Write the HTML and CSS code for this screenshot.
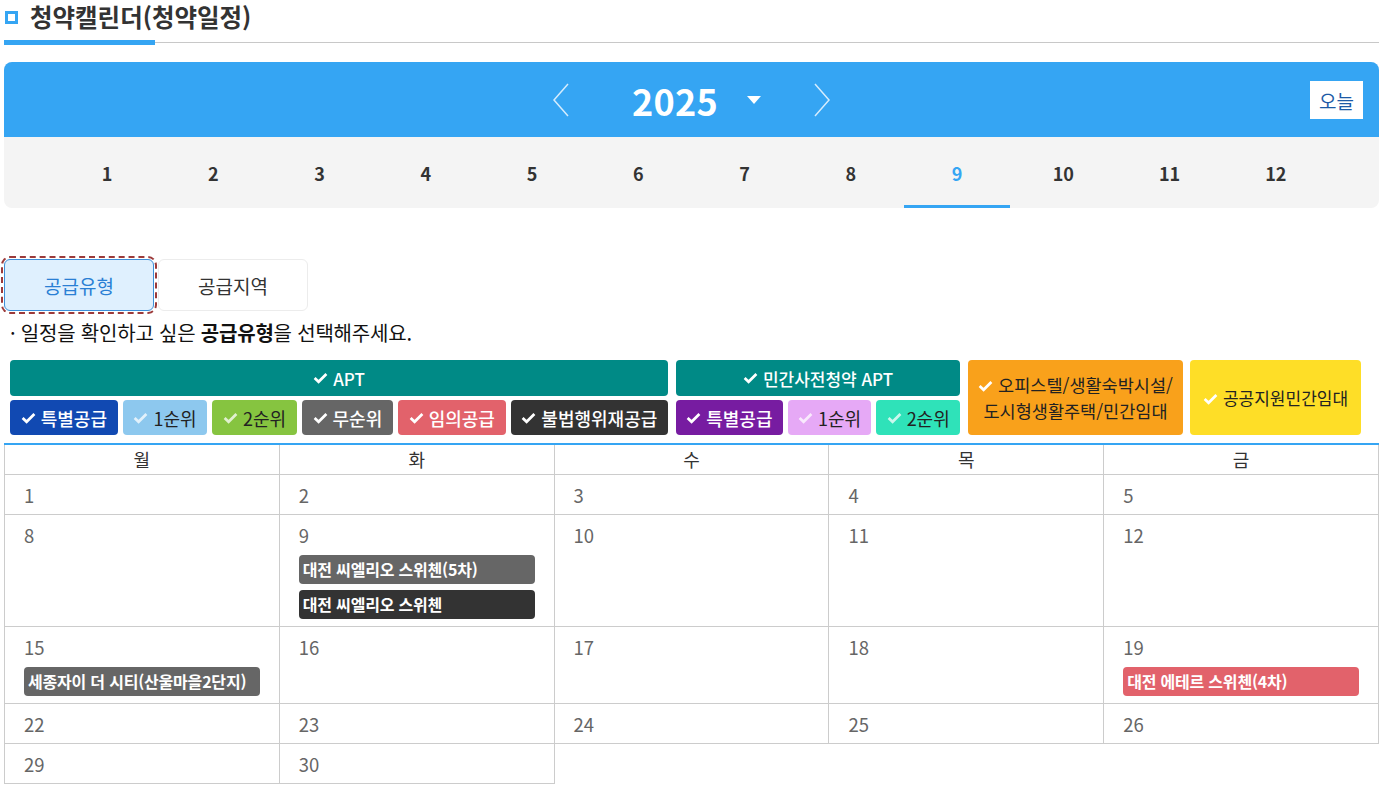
FILE: index.html
```html
<!DOCTYPE html>
<html lang="ko">
<head>
<meta charset="utf-8">
<title>청약캘린더</title>
<link rel="stylesheet" href="styles.css">
</head>
<body>
<div class="page">
  <div class="title-bar">
    <h2 class="title"><span class="title-sq"></span>청약캘린더(청약일정)</h2>
    <div class="title-line"><span class="tl-blue"></span><span class="tl-gray"></span></div>
  </div>

  <div class="nav">
    <div class="nav-top">
      <button class="arrow" aria-label="이전">
        <svg viewBox="0 0 18 34" width="18" height="34"><path d="M16 1 L2 17 L16 33" fill="none" stroke="#d4ecfd" stroke-width="1.5"/></svg>
      </button>
      <div class="year">2025<span class="caret"></span></div>
      <button class="arrow" aria-label="다음">
        <svg viewBox="0 0 18 34" width="18" height="34"><path d="M2 1 L16 17 L2 33" fill="none" stroke="#d4ecfd" stroke-width="1.5"/></svg>
      </button>
      <button class="today">오늘</button>
    </div>
    <div class="months">
      <span class="month">1</span><span class="month">2</span><span class="month">3</span><span class="month">4</span>
      <span class="month">5</span><span class="month">6</span><span class="month">7</span><span class="month">8</span>
      <span class="month active">9</span><span class="month">10</span><span class="month">11</span><span class="month">12</span>
    </div>
  </div>

  <div class="tabs">
    <button class="tab on">공급유형</button>
    <button class="tab">공급지역</button>
  </div>
  <p class="guide">· 일정을 확인하고 싶은 <b>공급유형</b>을 선택해주세요.</p>

  <div class="legend">
    <div class="lg-group g-apt">
      <div class="pill head teal"><svg class="ck" viewBox="0 0 15 12"><path d="M1.6 6 L5.6 9.8 L13.4 2"/></svg>APT</div>
      <div class="lg-row">
        <div class="pill c-blue"><svg class="ck" viewBox="0 0 15 12"><path d="M1.6 6 L5.6 9.8 L13.4 2"/></svg>특별공급</div>
        <div class="pill c-sky light"><svg class="ck" viewBox="0 0 15 12"><path d="M1.6 6 L5.6 9.8 L13.4 2"/></svg>1순위</div>
        <div class="pill c-green light"><svg class="ck" viewBox="0 0 15 12"><path d="M1.6 6 L5.6 9.8 L13.4 2"/></svg>2순위</div>
        <div class="pill c-gray"><svg class="ck" viewBox="0 0 15 12"><path d="M1.6 6 L5.6 9.8 L13.4 2"/></svg>무순위</div>
        <div class="pill c-red"><svg class="ck" viewBox="0 0 15 12"><path d="M1.6 6 L5.6 9.8 L13.4 2"/></svg>임의공급</div>
        <div class="pill c-dark"><svg class="ck" viewBox="0 0 15 12"><path d="M1.6 6 L5.6 9.8 L13.4 2"/></svg>불법행위재공급</div>
      </div>
    </div>
    <div class="lg-group g-pre">
      <div class="pill head teal"><svg class="ck" viewBox="0 0 15 12"><path d="M1.6 6 L5.6 9.8 L13.4 2"/></svg>민간사전청약 APT</div>
      <div class="lg-row">
        <div class="pill c-purple"><svg class="ck" viewBox="0 0 15 12"><path d="M1.6 6 L5.6 9.8 L13.4 2"/></svg>특별공급</div>
        <div class="pill c-lilac light"><svg class="ck" viewBox="0 0 15 12"><path d="M1.6 6 L5.6 9.8 L13.4 2"/></svg>1순위</div>
        <div class="pill c-mint light"><svg class="ck" viewBox="0 0 15 12"><path d="M1.6 6 L5.6 9.8 L13.4 2"/></svg>2순위</div>
      </div>
    </div>
    <div class="lg-box c-orange"><span><svg class="ck" viewBox="0 0 15 12"><path d="M1.6 6 L5.6 9.8 L13.4 2"/></svg>오피스텔/생활숙박시설/<br>도시형생활주택/민간임대</span></div>
    <div class="lg-box c-yellow"><span><svg class="ck" viewBox="0 0 15 12"><path d="M1.6 6 L5.6 9.8 L13.4 2"/></svg>공공지원민간임대</span></div>
  </div>

  <table class="cal">
    <thead>
      <tr><th>월</th><th>화</th><th>수</th><th>목</th><th>금</th></tr>
    </thead>
    <tbody>
      <tr><td><div class="d">1</div></td><td><div class="d">2</div></td><td><div class="d">3</div></td><td><div class="d">4</div></td><td><div class="d">5</div></td></tr>
      <tr>
        <td><div class="d">8</div></td>
        <td><div class="d">9</div>
          <div class="ev ev-gray">대전 씨엘리오 스위첸(5차)</div>
          <div class="ev ev-dark">대전 씨엘리오 스위첸</div>
        </td>
        <td><div class="d">10</div></td><td><div class="d">11</div></td><td><div class="d">12</div></td>
      </tr>
      <tr>
        <td><div class="d">15</div><div class="ev ev-gray">세종자이 더 시티(산울마을2단지)</div></td>
        <td><div class="d">16</div></td><td><div class="d">17</div></td><td><div class="d">18</div></td>
        <td><div class="d">19</div><div class="ev ev-red">대전 에테르 스위첸(4차)</div></td>
      </tr>
      <tr><td><div class="d">22</div></td><td><div class="d">23</div></td><td><div class="d">24</div></td><td><div class="d">25</div></td><td><div class="d">26</div></td></tr>
      <tr><td><div class="d">29</div></td><td><div class="d">30</div></td></tr>
    </tbody>
  </table>
</div>
</body>
</html>
```

FILE: styles.css
```css
* { box-sizing: border-box; }
body {
  margin: 0;
  background: #fff;
  font-family: "Noto Sans CJK KR", "Noto Sans", sans-serif;
  color: #333;
}
.page {
  width: 1375px;
  margin-left: 4px;
}
.title-bar {
  height: 45px;
  display: flex;
  flex-direction: column;
}
.title {
  display: flex;
  align-items: center;
  margin: 0;
  height: 40px;
  padding: 0 0 6px 1px;
  white-space: nowrap;
  font-size: 24.5px;
  font-weight: 700;
  color: #333;
  line-height: 30px;
}
.title-sq {
  width: 13px;
  height: 13px;
  border: 3px solid #35a5f3;
  margin-right: 12px;
  flex: none;
}
.title-line {
  display: flex;
  align-items: center;
  height: 5px;
}
.tl-blue {
  width: 151px;
  height: 5px;
  background: #35a5f3;
}
.tl-gray {
  flex: 1;
  height: 1px;
  background: #c8c8c8;
}
.nav {
  margin-top: 17px;
  border-radius: 8px;
  overflow: hidden;
  background: #f4f4f4;
}
.nav-top {
  position: relative;
  height: 75px;
  background: #35a5f3;
  display: flex;
  align-items: center;
  justify-content: center;
}
.arrow {
  background: none;
  border: 0;
  padding: 0;
  width: 18px;
  height: 34px;
  display: flex;
  cursor: pointer;
}
.year {
  display: flex;
  align-items: center;
  margin: 0 52px 0 62px;
  font-size: 36px;
  font-weight: 700;
  color: #fff;
  line-height: 1;
  letter-spacing: 0.3px;
}
.caret {
  width: 0;
  height: 0;
  border-left: 7px solid transparent;
  border-right: 7px solid transparent;
  border-top: 8px solid #fff;
  margin-left: 29px;
}
.today {
  position: absolute;
  right: 16px;
  top: 19px;
  width: 53px;
  height: 38px;
  background: #fff;
  border: 0;
  padding: 0;
  font-family: inherit;
  font-size: 19px;
  color: #1d5aa6;
}
.months {
  display: flex;
  padding: 0 50px;
  height: 71px;
}
.month {
  flex: 1;
  display: flex;
  align-items: center;
  justify-content: center;
  font-size: 18px;
  font-weight: 700;
  color: #333;
  border-bottom: 3px solid transparent;
  padding-top: 3px;
}
.month.active {
  color: #35a5f3;
  border-bottom-color: #35a5f3;
}
.tabs {
  display: flex;
  gap: 4px;
  margin-top: 51px;
}
.tab {
  width: 150px;
  height: 52px;
  border: 1px solid #ececec;
  border-radius: 6px;
  background: #fff;
  font-family: inherit;
  font-size: 19px;
  color: #333;
  padding: 0;
}
.tab.on {
  background: #dff0fe;
  border-color: #3d8fd8;
  color: #2a7fd4;
  outline: 2px dashed #9c3a3a;
  outline-offset: 1px;
}
.guide {
  margin: 8px 0 0 6px;
  font-size: 20px;
  line-height: 28px;
  color: #111;
  letter-spacing: -0.2px;
}
.guide b { font-weight: 700; }
.legend {
  display: flex;
  margin: 13px 0 0 6px;
  gap: 8px;
}
.lg-group {
  display: flex;
  flex-direction: column;
  gap: 4px;
}
.g-apt { width: 658px; }
.g-pre { width: 284px; }
.lg-row {
  display: flex;
  gap: 5px;
}
.pill {
  height: 34px;
  border-radius: 4px;
  display: flex;
  align-items: center;
  justify-content: center;
  font-size: 17px;
  font-weight: 500;
  color: #fff;
  white-space: nowrap;
  flex: 1 1 auto;
  padding: 0 6px;
}
.lg-row .pill { height: 35px; font-size: 18px; }
.ck {
  width: 15px;
  height: 12px;
  margin-right: 5px;
  flex: none;
}
.ck path {
  fill: none;
  stroke: currentColor;
  stroke-width: 2.7;
}
.pill.light { color: #222; font-weight: 400; }
.pill.light .ck { color: rgba(255,255,255,0.75); }
.teal { background: #008a86; }
.c-blue { background: #1149b2; }
.c-sky { background: #8dc8ee; }
.c-green { background: #86c440; }
.c-gray { background: #666; }
.c-red { background: #e2626b; }
.c-dark { background: #333; }
.c-purple { background: #771ca1; }
.c-lilac { background: #e6a9f6; }
.c-mint { background: #2fe2b9; }
.lg-box {
  height: 75px;
  border-radius: 4px;
  display: flex;
  align-items: center;
  justify-content: center;
  text-align: center;
  font-size: 17.5px;
  line-height: 26px;
  color: #222;
  white-space: nowrap;
}
.lg-box .ck { color: #fff; display: inline-block; }
.c-orange { background: #f9a11b; width: 215px; }
.c-yellow { background: #fede27; width: 171px; margin-left: -1px; font-size: 17px; }
.cal {
  width: 100%;
  margin-top: 8px;
  border-collapse: collapse;
  table-layout: fixed;
}
.cal th {
  height: 30px;
  border: 1px solid #ccc;
  border-top: 2px solid #35a5f3;
  font-size: 18px;
  font-weight: 400;
  color: #333;
  padding: 0;
  line-height: 27px;
}
.cal td {
  border: 1px solid #ccc;
  vertical-align: top;
  padding: 8px 19px 7px 19px;
}
.d {
  font-size: 18.5px;
  line-height: 24px;
  color: #666;
  font-weight: 400;
}
.ev {
  margin-top: 8px;
  height: 29px;
  border-radius: 4px;
  padding-left: 4px;
  font-size: 16px;
  font-weight: 700;
  color: #fff;
  line-height: 29px;
  white-space: nowrap;
  overflow: hidden;
  letter-spacing: -0.2px;
}
.ev + .ev { margin-top: 6px; }
.ev-gray { background: #666; }
.ev-dark { background: #333; }
.ev-red { background: #e2626b; }
```
